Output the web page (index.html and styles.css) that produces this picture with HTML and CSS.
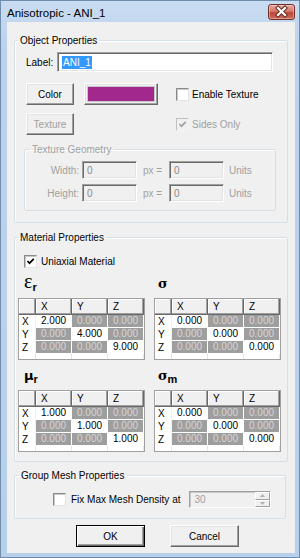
FILE: index.html
```html
<!DOCTYPE html>
<html lang="en">
<head>
    <meta charset="UTF-8">
    <meta name="viewport" content="width=device-width, initial-scale=1.0">
    <title>Anisotropic - ANI_1</title>
    <link rel="stylesheet" href="styles.css">
</head>
<body>
    <div class="window">
        <div class="titlebar">
            <span class="title">Anisotropic - ANI_1</span>
            <div class="close-btn">
                <svg width="27" height="16" viewBox="0 0 27 16">
                    <path d="M10 4 L17 11 M17 4 L10 11" stroke="#6b2a24" stroke-width="4.2" stroke-linecap="square" fill="none"/>
                    <path d="M10 4 L17 11 M17 4 L10 11" stroke="#ffffff" stroke-width="2.2" stroke-linecap="square" fill="none"/>
                </svg>
            </div>
        </div>

        <div class="client">
            <fieldset class="group group-object">
                <legend>Object Properties</legend>
                <div class="row row-label">
                    <span class="field-label">Label:</span>
                    <div class="edit edit-label"><span class="selected">ANI_1</span></div>
                </div>
                <div class="row row-color">
                    <div class="button btn-small">Color</div>
                    <div class="swatch"><div class="swatch-fill"></div></div>
                    <div class="check check-texture">
                        <span class="box"></span>
                        <span>Enable Texture</span>
                    </div>
                </div>
                <div class="row row-texture">
                    <div class="button btn-small disabled">Texture</div>
                    <div class="check check-sides disabled">
                        <span class="box">
                            <svg width="9" height="9" viewBox="0 0 9 9"><path d="M1.5 4 L3.5 6.2 L7.8 1.8" stroke="#a0a0a0" stroke-width="1.7" fill="none"/></svg>
                        </span>
                        <span>Sides Only</span>
                    </div>
                </div>
                <fieldset class="group group-geometry disabled">
                    <legend>Texture Geometry</legend>
                    <div class="geo-row">
                        <span class="geo-label">Width:</span>
                        <div class="edit edit-geo">0</div>
                        <span class="geo-eq">px =</span>
                        <div class="edit edit-geo">0</div>
                        <span class="geo-unit">Units</span>
                    </div>
                    <div class="geo-row">
                        <span class="geo-label">Height:</span>
                        <div class="edit edit-geo">0</div>
                        <span class="geo-eq">px =</span>
                        <div class="edit edit-geo">0</div>
                        <span class="geo-unit">Units</span>
                    </div>
                </fieldset>
            </fieldset>

            <fieldset class="group group-material">
                <legend>Material Properties</legend>
                <div class="check check-uniaxial">
                    <span class="box">
                        <svg width="9" height="9" viewBox="0 0 9 9"><path d="M1.5 4 L3.5 6.2 L7.8 1.8" stroke="#000" stroke-width="1.7" fill="none"/></svg>
                    </span>
                    <span>Uniaxial Material</span>
                </div>
                <div class="tensors">
                    <div class="tensor">
                        <div class="symbol symbol-eps"><span class="sym-eps">ε</span><sub>r</sub></div>
                        <div class="matrix">
                            <div class="hdr"></div><div class="hdr">X</div><div class="hdr">Y</div><div class="hdr">Z</div>
                            <div class="rhdr">X</div><div class="cell">2.000</div><div class="cell off">0.000</div><div class="cell off">0.000</div>
                            <div class="rhdr">Y</div><div class="cell off">0.000</div><div class="cell">4.000</div><div class="cell off">0.000</div>
                            <div class="rhdr">Z</div><div class="cell off">0.000</div><div class="cell off">0.000</div><div class="cell">9.000</div>
                            <div class="fill"></div><div class="fill"></div><div class="fill"></div><div class="fill"></div>
                        </div>
                    </div>
                    <div class="tensor">
                        <div class="symbol"><span class="sym-sigma">σ</span></div>
                        <div class="matrix">
                            <div class="hdr"></div><div class="hdr">X</div><div class="hdr">Y</div><div class="hdr">Z</div>
                            <div class="rhdr">X</div><div class="cell">0.000</div><div class="cell off">0.000</div><div class="cell off">0.000</div>
                            <div class="rhdr">Y</div><div class="cell off">0.000</div><div class="cell">0.000</div><div class="cell off">0.000</div>
                            <div class="rhdr">Z</div><div class="cell off">0.000</div><div class="cell off">0.000</div><div class="cell">0.000</div>
                            <div class="fill"></div><div class="fill"></div><div class="fill"></div><div class="fill"></div>
                        </div>
                    </div>
                    <div class="tensor">
                        <div class="symbol"><span class="sym-mu">μ</span><sub>r</sub></div>
                        <div class="matrix">
                            <div class="hdr"></div><div class="hdr">X</div><div class="hdr">Y</div><div class="hdr">Z</div>
                            <div class="rhdr">X</div><div class="cell">1.000</div><div class="cell off">0.000</div><div class="cell off">0.000</div>
                            <div class="rhdr">Y</div><div class="cell off">0.000</div><div class="cell">1.000</div><div class="cell off">0.000</div>
                            <div class="rhdr">Z</div><div class="cell off">0.000</div><div class="cell off">0.000</div><div class="cell">1.000</div>
                            <div class="fill"></div><div class="fill"></div><div class="fill"></div><div class="fill"></div>
                        </div>
                    </div>
                    <div class="tensor">
                        <div class="symbol"><span class="sym-sigma">σ</span><sub>m</sub></div>
                        <div class="matrix">
                            <div class="hdr"></div><div class="hdr">X</div><div class="hdr">Y</div><div class="hdr">Z</div>
                            <div class="rhdr">X</div><div class="cell">0.000</div><div class="cell off">0.000</div><div class="cell off">0.000</div>
                            <div class="rhdr">Y</div><div class="cell off">0.000</div><div class="cell">0.000</div><div class="cell off">0.000</div>
                            <div class="rhdr">Z</div><div class="cell off">0.000</div><div class="cell off">0.000</div><div class="cell">0.000</div>
                            <div class="fill"></div><div class="fill"></div><div class="fill"></div><div class="fill"></div>
                        </div>
                    </div>
                </div>
            </fieldset>

            <fieldset class="group group-mesh">
                <legend>Group Mesh Properties</legend>
                <div class="row row-mesh">
                    <div class="check check-mesh">
                        <span class="box"></span>
                        <span>Fix Max Mesh Density at</span>
                    </div>
                    <div class="spin">
                        <span class="spin-value">30</span>
                        <div class="spin-buttons">
                            <div class="spin-btn"><svg width="5" height="3" viewBox="0 0 5 3"><path d="M0 3 L2.5 0 L5 3 Z" fill="#b0b0b0"/></svg></div>
                            <div class="spin-btn"><svg width="5" height="3" viewBox="0 0 5 3"><path d="M0 0 L2.5 3 L5 0 Z" fill="#b0b0b0"/></svg></div>
                        </div>
                    </div>
                </div>
            </fieldset>

            <div class="dialog-buttons">
                <div class="button btn-dialog default">OK</div>
                <div class="button btn-dialog">Cancel</div>
            </div>
        </div>
    </div>
</body>
</html>
```

FILE: styles.css
```css
* {
    margin: 0;
    padding: 0;
    box-sizing: border-box;
}

body {
    font-family: "Liberation Sans", Arial, sans-serif;
    font-size: 10px;
    color: #000;
    background: #fff;
}

.window {
    width: 300px;
    height: 558px;
    display: flex;
    flex-direction: column;
    background: linear-gradient(180deg, #c9dcf1 0%, #bcd2ec 8%, #b8cfea 100%);
    border: 1px solid #6f8cab;
    padding: 0 4px 4px 6px;
}

.titlebar {
    height: 21px;
    display: flex;
    justify-content: space-between;
}

.title {
    font-size: 11.5px;
    line-height: 21px;
    padding-top: 2px;
    color: #000;
}

.close-btn {
    width: 27px;
    height: 16px;
    margin-top: 3px;
    border: 1px solid #6e3028;
    border-radius: 3px;
    background: linear-gradient(180deg, #e6a99f 0%, #d3786b 45%, #c0463a 55%, #cf6a59 100%);
    display: flex;
    align-items: center;
    justify-content: center;
    box-shadow: inset 0 0 0 1px rgba(255,255,255,0.35);
}

.close-btn svg {
    display: block;
    margin: -1px;
}

.client {
    flex: 1;
    background: #f0f0f0;
    padding: 12px 7px 0 7px;
    display: flex;
    flex-direction: column;
}

/* Group boxes */
.group {
    border: 1px solid #d5dfe5;
    border-radius: 2px;
    box-shadow: inset 1px 1px 0 #fff;
}

.group legend {
    font-size: 10px;
    line-height: 13px;
    padding: 0 2px;
}

.group-object {
    width: 274px;
    padding: 5px 11px 11px 11px;
}

.group-object > legend {
    margin-left: -8px;
}

.row {
    display: flex;
    align-items: center;
}

.row-label {
    height: 20px;
}

.field-label {
    width: 31px;
}

.edit {
    background: #fff;
    border: 1px solid;
    border-color: #a0a0a0 #fff #fff #a0a0a0;
    box-shadow: inset 1px 1px 0 #696969, inset -1px -1px 0 #e3e3e3;
    display: flex;
    align-items: center;
    padding-left: 4px;
}

.edit-label {
    width: 216px;
    height: 20px;
}

.selected {
    background: #3399ff;
    color: #fff;
    line-height: 13px;
    padding: 0 1px;
}

.button {
    background: #f0f0f0;
    border: 1px solid;
    border-color: #fff #696969 #696969 #fff;
    box-shadow: inset -1px -1px 0 #a0a0a0, inset 1px 1px 0 #e3e3e3;
    display: flex;
    align-items: center;
    justify-content: center;
}

.button.disabled {
    color: #a0a0a0;
}

.btn-small {
    width: 48px;
    height: 22px;
}

.row-color {
    margin-top: 11px;
    height: 22px;
}

.swatch {
    width: 74px;
    height: 22px;
    margin-left: 10px;
    border: 1px solid;
    border-color: #fff #696969 #696969 #fff;
    box-shadow: inset -1px -1px 0 #a0a0a0, inset 1px 1px 0 #e3e3e3;
    padding: 2px;
}

.swatch-fill {
    width: 100%;
    height: 100%;
    background: #a3288d;
    border: 1px solid #c8c8c8;
}

.check {
    display: flex;
    align-items: center;
    gap: 3px;
}

.check.disabled {
    color: #a0a0a0;
}

.box {
    width: 13px;
    height: 13px;
    background: #fff;
    border: 1px solid;
    border-color: #8a8a8a #e3e3e3 #e3e3e3 #8a8a8a;
    box-shadow: inset 1px 1px 0 #c9c9c9;
    display: flex;
    align-items: center;
    justify-content: center;
}

.check.disabled .box {
    background: #f0f0f0;
    border-color: #c0c0c0 #f4f4f4 #f4f4f4 #c0c0c0;
    box-shadow: none;
}

.check-texture {
    margin-left: 18px;
}

.row-texture {
    margin-top: 8px;
    height: 22px;
}

.check-sides {
    margin-left: 102px;
}

/* Texture geometry */
.group-geometry {
    width: 252px;
    margin: 8px 0 0 -2px;
    padding: 5px 0 8px 0;
    color: #a0a0a0;
}

.group-geometry > legend {
    margin-left: 5px;
}

.geo-row {
    display: flex;
    align-items: center;
    height: 18px;
}

.geo-row + .geo-row {
    margin-top: 5px;
}

.geo-label {
    width: 54px;
    text-align: right;
    margin-right: 3px;
}

.edit-geo {
    width: 55px;
    height: 18px;
    background: #f0f0f0;
    color: #8a8a8a;
    padding-left: 4px;
}

.geo-eq {
    margin: 0 6px;
    width: 20px;
}

.geo-unit {
    margin-left: 5px;
}

/* Material properties */
.group-material {
    width: 274px;
    margin-top: 8px;
    padding: 11px 3px 9px 3px;
}

.group-material > legend {
    margin-left: 0;
}

.check-uniaxial {
    margin-left: 6px;
    height: 13px;
    gap: 4px;
}

.tensors {
    display: grid;
    grid-template-columns: 127px 127px;
    column-gap: 9px;
}

.symbol {
    height: 30px;
    padding: 6px 0 0 6px;
    line-height: 20px;
    font-weight: bold;
    white-space: nowrap;
}

.symbol-eps {
    padding-top: 3px;
}

.symbol sub {
    font-size: 11px;
    vertical-align: -3px;
    line-height: 0;
}

.sym-eps {
    font-family: "Liberation Serif", serif;
    font-size: 20px;
    font-weight: normal;
}

.sym-sigma {
    font-family: "DejaVu Serif", serif;
    font-size: 13px;
    margin-left: 3px;
}

.sym-mu {
    font-family: "DejaVu Sans", sans-serif;
    font-size: 13px;
}

.tensor:nth-child(2) .symbol,
.tensor:nth-child(4) .symbol {
    padding-left: 1px;
}

.matrix {
    height: 62px;
    background: #fff;
    border: 1px solid #a0a0a0;
    display: grid;
    grid-template-columns: 17px 36px 36px 36px;
    grid-template-rows: 16px 13px 13px 13px 1fr;
}

.hdr {
    background: #f0f0f0;
    border-right: 1px solid #696969;
    border-bottom: 1px solid #696969;
    box-shadow: inset -1px -1px 0 #a0a0a0, inset 1px 1px 0 #fff;
    padding-left: 5px;
    line-height: 15px;
}

.rhdr {
    padding-left: 3px;
    line-height: 13px;
    border-right: 1px solid #f0f0f0;
}

.cell {
    line-height: 12px;
    text-align: center;
    border-right: 1px solid #fff;
    border-bottom: 1px solid #fff;
}

.cell.off {
    background: #9e9e9e;
    color: #d6d6d6;
}

.fill {
    border-right: 1px solid #e6e6e6;
}

/* Group mesh */
.group-mesh {
    width: 272px;
    margin-top: 7px;
    padding: 9px 0 10px 38px;
}

.group-mesh > legend {
    margin-left: -34px;
}

.row-mesh {
    height: 17px;
}

.check-mesh {
    gap: 5px;
}

.spin {
    width: 82px;
    height: 17px;
    margin-left: 9px;
    background: #f0f0f0;
    border: 1px solid;
    border-color: #a0a0a0 #fff #fff #a0a0a0;
    box-shadow: inset 1px 1px 0 #c8c8c8;
    display: flex;
    justify-content: space-between;
    color: #a0a0a0;
}

.spin-value {
    padding-left: 4px;
    line-height: 15px;
}

.spin-buttons {
    width: 15px;
    display: flex;
    flex-direction: column;
}

.spin-btn {
    flex: 1;
    display: flex;
    align-items: center;
    justify-content: center;
    border: 1px solid;
    border-color: #fff #a0a0a0 #a0a0a0 #fff;
}

.spin-btn svg {
    display: block;
}

/* Dialog buttons */
.dialog-buttons {
    display: flex;
    gap: 25px;
    padding-left: 62px;
    margin-top: 6px;
}

.btn-dialog {
    width: 69px;
    height: 22px;
    font-size: 10px;
}

.btn-dialog.default {
    border: 1px solid #000;
    box-shadow: inset 1px 1px 0 #fff, inset -1px -1px 0 #696969, inset -2px -2px 0 #a0a0a0;
}
```
